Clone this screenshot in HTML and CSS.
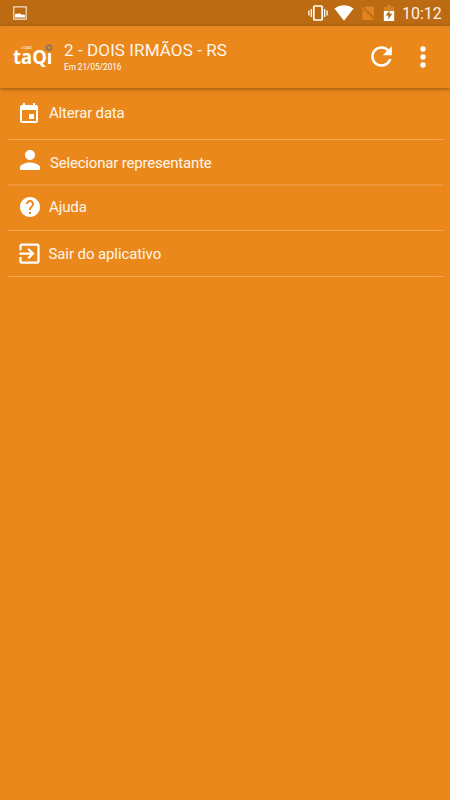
FILE: index.html
```html
<!DOCTYPE html>
<html lang="pt-BR">
<head>
<meta charset="utf-8">
<title>taQi</title>
<link rel="stylesheet" href="styles.css">
</head>
<body>
<div class="status">
  <svg class="picture" width="14" height="14" viewBox="0 0 14 14"><path fill="none" stroke="#f3dfcb" stroke-width="1.200" d="M.8.8h12.4v12.4H.8z"/><path fill="#fff" d="M2 11.500V8.500L3.500 7.500 5 8l1.500-1L8 8.500h2l2 .5v2.500z"/></svg>
  <svg class="vibrate" width="20" height="16" viewBox="0 0 20 16"><rect x="5.800" y="1" width="8.400" height="14" rx="1" fill="none" stroke="#fff" stroke-width="1.700"/><path stroke="#fff" stroke-width="1.300" d="M3.300 4v8M.9 5.500v5M16.700 4v8M19.100 5.500v5"/></svg>
  <svg class="wifi" width="20" height="16" viewBox="0 0 20 16"><path fill="#fff" d="M10 15.700.4 3.500Q4.700.3 10 .3t9.600 3.200z"/></svg>
  <svg class="nosim" width="14" height="15" viewBox="0 0 14 15"><path fill="#e28420" d="M4.500.5H12q1 0 1 1v9.200L3.500 1.500zM1.500 3.500 12 14H2.500q-1 0-1-1z"/><path stroke="#e28420" stroke-width="1.100" d="m.5 1.300 13 13"/></svg>
  <svg class="battery" width="12" height="17" viewBox="0 0 12 17"><path fill="#d98022" d="M4 0h4v2h3v5H1V2h3z"/><path fill="#fff" d="M.8 6h10.400v10H.8z"/><path fill="#b86610" d="M6.500 5.500 2.700 10.600h2.600V14.500l3.900-5.700H6.500z"/></svg>
  <span class="clock">10:12</span>
</div>
<header class="bar">
  <svg class="logo" width="42" height="28" viewBox="0 0 42 28">
    <text class="small" x="9" y="5.500" textLength="11" lengthAdjust="spacingAndGlyphs">LOJAS</text>
    <text class="word" x="1" y="21" textLength="39.500" lengthAdjust="spacingAndGlyphs">taQı</text>
    <circle cx="37" cy="4.600" r="2.500"/>
  </svg>
  <div class="titles">
    <div class="title">2 - DOIS IRMÃOS - RS</div>
    <div class="date">Em 21/05/2016</div>
  </div>
  <svg class="refresh" width="31" height="31" viewBox="0 0 24 24"><path fill="#fff" d="M17.650 6.350C16.200 4.900 14.210 4 12 4c-4.420 0-7.990 3.580-7.990 8s3.570 8 7.990 8c3.730 0 6.840-2.550 7.730-6h-2.080c-.82 2.330-3.040 4-5.650 4-3.310 0-6-2.690-6-6s2.690-6 6-6c1.660 0 3.140.69 4.220 1.780L13 11h7V4l-2.350 2.350z"/></svg>
  <svg class="more" width="32" height="32" viewBox="0 0 24 24"><g fill="#fff"><circle cx="12" cy="6" r="2"/><circle cx="12" cy="12" r="2"/><circle cx="12" cy="18" r="2"/></g></svg>
</header>
<ul class="menu">
  <li class="item event"><svg width="24" height="24" viewBox="0 0 24 24"><path d="M17 12h-5v5h5v-5zM16 1v2H8V1H6v2H5c-1.110 0-1.990.9-1.990 2L3 19c0 1.100.89 2 2 2h14c1.100 0 2-.9 2-2V5c0-1.100-.9-2-2-2h-1V1h-2zm3 18H5V8h14v11z"/></svg><span>Alterar data</span></li>
  <li class="item person"><svg width="30" height="30" viewBox="0 0 24 24"><path d="M12 12c2.210 0 4-1.790 4-4s-1.790-4-4-4-4 1.790-4 4 1.790 4 4 4zm0 2c-2.670 0-8 1.340-8 4v2h16v-2c0-2.660-5.330-4-8-4z"/></svg><span>Selecionar representante</span></li>
  <li class="item help"><svg width="24" height="24" viewBox="0 0 24 24"><path d="M12 2C6.480 2 2 6.480 2 12s4.480 10 10 10 10-4.480 10-10S17.520 2 12 2zm1 17h-2v-2h2v2zm2.070-7.750-.9.920C13.450 12.900 13 13.500 13 15h-2v-.5c0-1.100.45-2.100 1.170-2.830l1.240-1.260c.37-.36.59-.86.59-1.410 0-1.100-.9-2-2-2s-2 .9-2 2H8c0-2.210 1.790-4 4-4s4 1.790 4 4c0 .88-.36 1.680-.93 2.250z"/></svg><span>Ajuda</span></li>
  <li class="item exit"><svg width="27" height="27" viewBox="0 0 24 24"><path d="M10.090 15.590 11.500 17l5-5-5-5-1.410 1.410L12.670 11H3v2h9.670l-2.580 2.590zM19 3H5c-1.110 0-2 .9-2 2v4h2V5h14v14H5v-4H3v4c0 1.100.89 2 2 2h14c1.100 0 2-.9 2-2V5c0-1.100-.9-2-2-2z"/></svg><span>Sair do aplicativo</span></li>
</ul>
</body>
</html>
```
FILE: styles.css
```css
* { box-sizing: border-box; }
body {
  margin: 0;
  height: 800px;
  overflow: hidden;
  background: #ea881b;
  color: #fff;
  font-family: Roboto, sans-serif;
}
svg { display: block; flex: none; }
.status {
  display: flex;
  align-items: flex-start;
  height: 26px;
  background: #bc6b13;
}
.picture { margin: 6px 0 0 13px; }
.vibrate { margin: 5px 0 0 281px; }
.wifi { margin: 5px 0 0 6px; }
.nosim { margin: 6px 0 0 7px; }
.battery { margin: 5px 0 0 8px; }
.clock { margin: 4px 0 0 7px; font-size: 16px; line-height: 20px; white-space: nowrap; color: #fbf2e8; }
.bar {
  display: flex;
  align-items: flex-start;
  height: 62px;
  background: #ea881b;
  box-shadow: 0 1px 4px rgba(90, 45, 0, .6);
}
.logo { margin: 17px 0 0 12px; overflow: visible; fill: #fff; }
.logo .small { font: 4px "Open Sans", sans-serif; }
.logo .word { font: bold 20px "Open Sans", sans-serif; }
.logo circle { fill: none; stroke: #827565; stroke-width: 1.700; }
.titles { width: 290px; margin: 14px 0 0 10px; white-space: nowrap; }
.title { font-size: 17px; line-height: 21px; letter-spacing: .1px; color: #fff5ea; }
.date { margin-top: 1px; font-size: 8.200px; line-height: 10px; }
.refresh { margin: 15px 0 0 11.500px; }
.more { margin: 15px 0 0 10.500px; }
.menu { list-style: none; margin: 0; padding: 0 7px 0 8px; }
.item {
  display: flex;
  align-items: center;
  height: 46px;
  border-bottom: 1px solid #f7a550;
  font-size: 15px;
  line-height: 20px;
  color: #fff5ea;
  white-space: nowrap;
}
.item svg { fill: #fff; }
.event { height: 52px; }
.event svg { margin-left: 9px; }
.event span { margin: -1px 0 0 8px; letter-spacing: -.18px; }
.person { border-bottom: 2px solid #f19639; }
.person svg { margin: -5px 0 0 7px; }
.person span { margin: 1px 0 0 5px; letter-spacing: -.19px; }
.help { height: 45px; }
.help svg { margin: -3px 0 0 10px; }
.help span { margin: -2px 0 0 7px; letter-spacing: -.1px; }
.exit svg { margin-left: 8px; }
.exit span { margin-left: 5.500px; letter-spacing: -.1px; }
```
